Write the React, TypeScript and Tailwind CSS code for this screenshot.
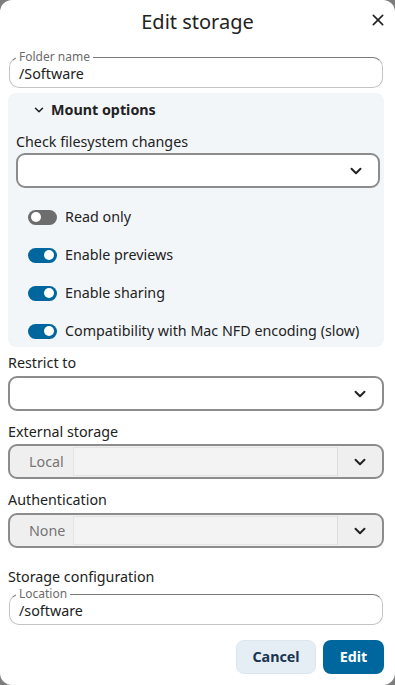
import React from "react";

function Chevron({ className = "" }: { className?: string }) {
  return (
    <svg viewBox="0 0 24 24" className={className} fill="none" stroke="currentColor" strokeWidth={2.6} strokeLinecap="round" strokeLinejoin="round">
      <path d="M6 9l6 6 6-6" />
    </svg>
  );
}

function Toggle({ on, label }: { on: boolean; label: string }) {
  return (
    <div className="flex items-center h-[38px] pl-5 shrink-0">
      <div
        className={
          "w-[29px] h-[15px] rounded-full flex items-center px-[3px] " +
          (on ? "bg-[#00679e] justify-end" : "bg-[#6d6d6d] justify-start")
        }
      >
        <div className="w-[10px] h-[10px] rounded-full bg-white" />
      </div>
      <span className="ml-2 text-[14.3px] text-[#222]">{label}</span>
    </div>
  );
}

function FloatField({ label, value }: { label: string; value: string }) {
  return (
    <div className="relative h-[31px] rounded-[10px] border border-[#c4c4c4] border-t-[#7a7a7a] flex items-end pb-[4px] pl-[9px]">
      <span className="absolute -top-[8px] left-[6px] bg-white px-[3px] text-[12px] leading-[14px] text-[#6b6b6b]">
        {label}
      </span>
      <span className="text-[14.3px] leading-[18px] text-[#222]">{value}</span>
    </div>
  );
}

function Select({ value, disabled }: { value?: string; disabled?: boolean }) {
  return (
    <div
      className={
        "h-[35px] shrink-0 rounded-[9px] border-2 border-[#8c8c8c] flex items-center " +
        (disabled ? "bg-[#efefef]" : "bg-white")
      }
    >
      {disabled ? (
        <>
          <div className="h-full flex items-center pl-[19px] w-[63px] text-[14.3px] text-[#757575]">{value}</div>
          <div className="flex-1 h-[29px] bg-[#f3f3f3] border border-[#e4e4e4] border-r-[#dcdcdc]" />
        </>
      ) : (
        <div className="flex-1" />
      )}
      <div className="w-[44px] flex justify-center">
        <Chevron className="w-[18px] h-[18px] text-[#222]" />
      </div>
    </div>
  );
}

function Label({ text, className }: { text: string; className: string }) {
  return <div className={"shrink-0 text-[14.3px] text-[#222] " + className}>{text}</div>;
}

export default function App() {
  return (
    <div className="min-h-[685px] bg-[#7d7d7d]" style={{ fontFamily: '"Noto Sans", "Open Sans", sans-serif' }}>
      <div className="h-[685px] bg-white rounded-[12px] pl-2 pr-[11px] flex flex-col">
        <div className="relative h-[44px] shrink-0 flex items-center justify-center">
          <h1 className="text-[20px] text-[#222] pl-[3px]">Edit storage</h1>
          <svg viewBox="0 0 24 24" className="absolute right-[-2px] top-[12px] w-[16px] h-[16px] text-[#222]" fill="none" stroke="currentColor" strokeWidth={2.4} strokeLinecap="round">
            <path d="M5 5l14 14M19 5L5 19" />
          </svg>
        </div>

        <div className="mt-[13px] mx-[1px] shrink-0">
          <FloatField label="Folder name" value="/Software" />
        </div>

        <div className="mt-[5px] bg-[#f3f6f9] rounded-[8px] h-[254px] shrink-0 overflow-hidden">
          <div className="h-[32px] flex items-center pl-[24px] pt-[1px]">
            <Chevron className="w-[14px] h-[14px] text-[#222]" />
            <span className="ml-[5px] text-[14.3px] font-bold text-[#222]">Mount options</span>
          </div>
          <div className="px-2">
            <Label text="Check filesystem changes" className="leading-[22px] pt-[6px]" />
            <div className="mr-[-4px]">
              <Select />
            </div>
          </div>
          <div className="mt-[10px] flex flex-col">
            <Toggle on={false} label="Read only" />
            <Toggle on={true} label="Enable previews" />
            <Toggle on={true} label="Enable sharing" />
            <Toggle on={true} label="Compatibility with Mac NFD encoding (slow)" />
          </div>
        </div>

        <Label text="Restrict to" className="leading-[22px] pt-[5px] pb-[2px]" />
        <Select />

        <Label text="External storage" className="leading-[22px] pt-[10px] pb-[1px]" />
        <Select value="Local" disabled />

        <Label text="Authentication" className="leading-[22px] pt-[10px] pb-[2px]" />
        <Select value="None" disabled />

        <Label text="Storage configuration" className="leading-[18px] pt-[20px] pb-[2px]" />
        <div className="mt-[6px] mx-[1px] shrink-0">
          <FloatField label="Location" value="/software" />
        </div>

        <div className="mt-[15px] flex justify-end gap-[7px] shrink-0">
          <button className="h-[34px] w-[80px] rounded-[8px] bg-[#e6eef5] border border-[#dde6ee] text-[14.3px] font-bold text-[#1a3550]">
            Cancel
          </button>
          <button className="h-[34px] w-[61px] rounded-[8px] bg-[#00679e] text-[14.3px] font-bold text-white">
            Edit
          </button>
        </div>
      </div>
    </div>
  );
}
